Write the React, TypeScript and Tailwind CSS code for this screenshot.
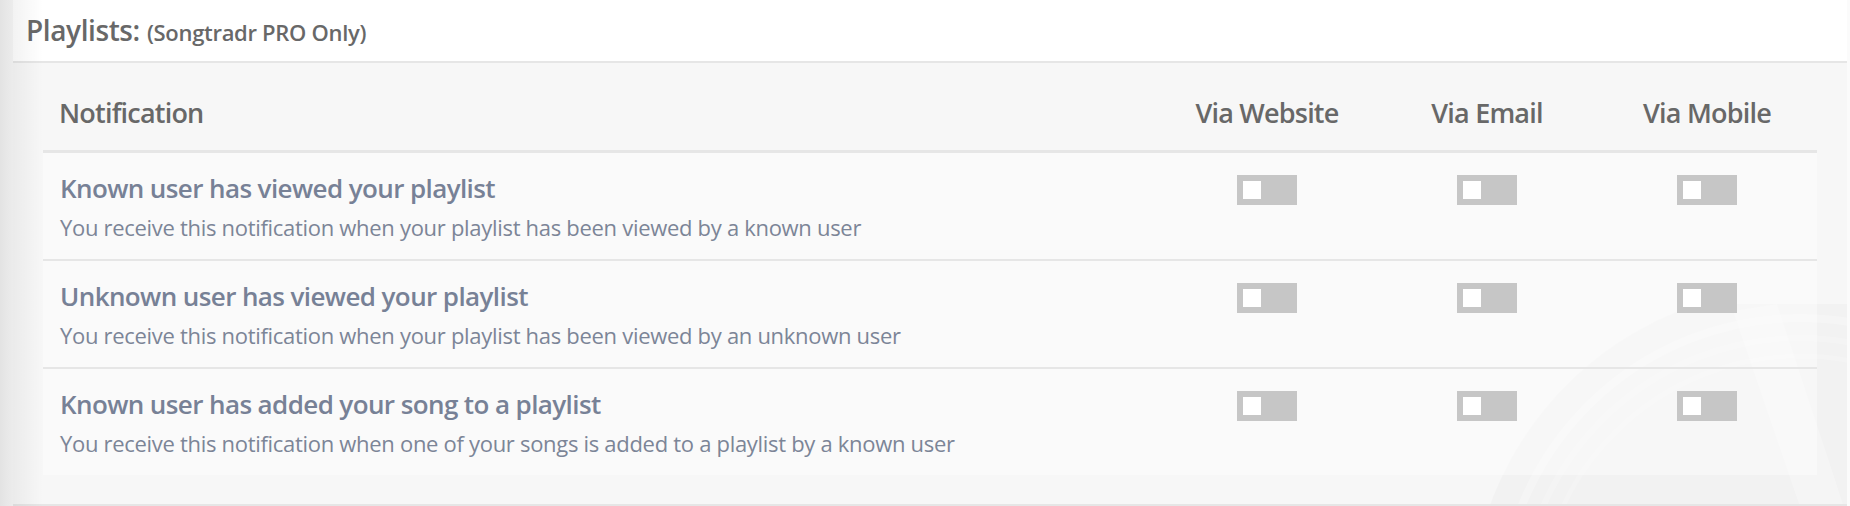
const channels = ['Via Website', 'Via Email', 'Via Mobile'];

const rows = [
  {
    title: 'Known user has viewed your playlist',
    text: 'You receive this notification when your playlist has been viewed by a known user',
  },
  {
    title: 'Unknown user has viewed your playlist',
    text: 'You receive this notification when your playlist has been viewed by an unknown user',
  },
  {
    title: 'Known user has added your song to a playlist',
    text: 'You receive this notification when one of your songs is added to a playlist by a known user',
  },
];

const Toggle = () => (
  <div className="flex h-[30px] w-[60px] items-start bg-[#c6c6c6] p-[6px]">
    <div className="h-[18px] w-[18px] bg-white" />
  </div>
);

// faint record watermark in the bottom right corner
const Watermark = () => (
  <svg
    className="pointer-events-none absolute bottom-0 right-0"
    width="360"
    height="200"
    viewBox="0 0 360 200"
  >
    <circle cx="313" cy="314" r="330" fill="#000" fillOpacity="0.02" />
    <circle cx="313" cy="314" r="300" fill="none" stroke="#fff" strokeOpacity="0.25" strokeWidth="8" />
    <circle cx="313" cy="314" r="280" fill="none" stroke="#fff" strokeOpacity="0.2" strokeWidth="6" />
    <circle cx="313" cy="314" r="262" fill="none" stroke="#fff" strokeOpacity="0.15" strokeWidth="5" />
    <polygon points="246,7 290,0 356,200 312,200" fill="#fff" fillOpacity="0.25" />
  </svg>
);

export default function App() {
  return (
    <div className="relative flex h-[506px] w-full overflow-hidden bg-white font-['Open_Sans',sans-serif]">
      <div className="w-[13px] shrink-0 bg-gradient-to-r from-[#e3e3e3] to-[#ececec]" />

      <div className="relative flex flex-1 flex-col">
        {/* Title bar */}
        <div className="flex h-[63px] shrink-0 items-baseline gap-[7px] border-b-2 border-[#e6e6e6] bg-white pl-[13px] pt-[14px] text-[#686868]">
          <span className="text-[28px] leading-[32px] font-semibold tracking-[-0.4px]">Playlists:</span>
          <span className="text-[22px] leading-[32px] font-semibold tracking-[-0.3px]">(Songtradr PRO Only)</span>
        </div>

        {/* Panel */}
        <div className="relative flex-1 border-b-2 border-[#e6e6e6] bg-[#f7f7f7] px-[30px]">
          <Watermark />

          <div className="relative">
            <div className="grid h-[90px] grid-cols-[1fr_220px_220px_220px] border-b-[3px] border-[#e6e6e6] pt-[34px] text-[27px] leading-[32px] font-semibold tracking-[-0.8px] text-[#686868]">
              <div className="pl-[16px]">Notification</div>
              {channels.map((c) => (
                <div key={c} className="text-center">
                  {c}
                </div>
              ))}
            </div>

            {rows.map((r, i) => (
              <div
                key={r.title}
                className={
                  i < rows.length - 1
                    ? 'grid h-[108px] grid-cols-[1fr_220px_220px_220px] border-b-2 border-[#e6e6e6] bg-white/40'
                    : 'grid h-[106px] grid-cols-[1fr_220px_220px_220px] bg-white/40'
                }
              >
                <div className="pl-[17px] pt-[19px]">
                  <div className="text-[26px] leading-[32px] font-semibold tracking-[-0.6px] text-[#778196]">
                    {r.title}
                  </div>
                  <div className="mt-[8px] text-[22px] leading-[30px] tracking-[-0.3px] text-[#7c8597]">
                    {r.text}
                  </div>
                </div>
                {channels.map((c) => (
                  <div key={c} className="flex justify-center pt-[22px]">
                    <Toggle />
                  </div>
                ))}
              </div>
            ))}
          </div>
        </div>

        <div className="pointer-events-none absolute inset-y-0 left-0 z-10 w-[30px] bg-gradient-to-r from-black/[0.05] to-transparent" />
      </div>

      <div className="w-[3px] shrink-0 bg-[#fbfbfb]" />
    </div>
  );
}
